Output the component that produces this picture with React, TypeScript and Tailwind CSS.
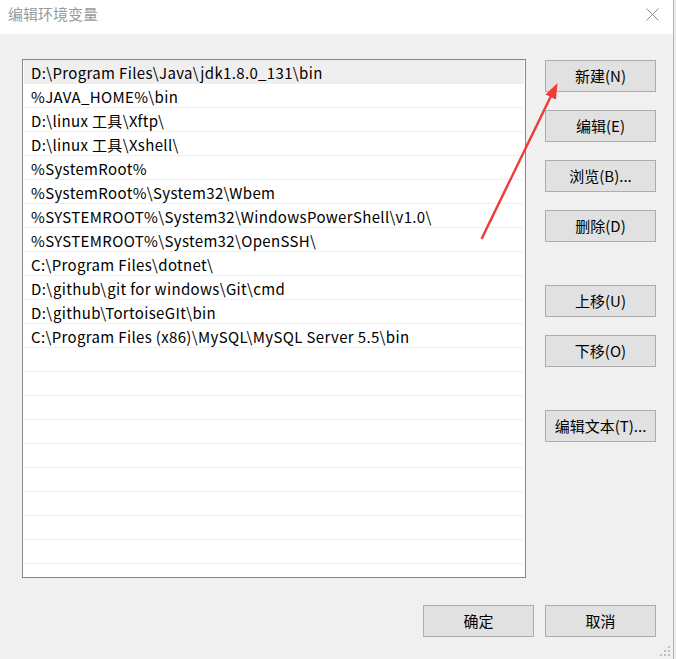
const paths = [
  "D:\\Program Files\\Java\\jdk1.8.0_131\\bin",
  "%JAVA_HOME%\\bin",
  "D:\\linux 工具\\Xftp\\",
  "D:\\linux 工具\\Xshell\\",
  "%SystemRoot%",
  "%SystemRoot%\\System32\\Wbem",
  "%SYSTEMROOT%\\System32\\WindowsPowerShell\\v1.0\\",
  "%SYSTEMROOT%\\System32\\OpenSSH\\",
  "C:\\Program Files\\dotnet\\",
  "D:\\github\\git for windows\\Git\\cmd",
  "D:\\github\\TortoiseGIt\\bin",
  "C:\\Program Files (x86)\\MySQL\\MySQL Server 5.5\\bin",
];

// empty rows fill the rest of the list box
const rows = [...paths, ...Array(10).fill("")];

const Btn = ({ label, className = "" }: { label: string; className?: string }) => (
  <button
    className={`w-[111px] h-[32px] bg-[#e1e1e1] border border-[#adadad] text-[15px] text-black flex items-center justify-center ${className}`}
  >
    {label}
  </button>
);

export default function App() {
  return (
    <div
      className="relative w-[676px] h-[659px] flex bg-[#f0f0f0] overflow-hidden"
      style={{ fontFamily: '"Noto Sans CJK SC", sans-serif' }}
    >
      {/* window */}
      <div className="w-[673px] h-full flex flex-col">
        {/* title bar */}
        <div className="h-[34px] bg-white flex items-center justify-between pl-[8px] pr-[14px] pb-[5px]">
          <span className="text-[15px] text-[#9a9a9a]">编辑环境变量</span>
          <svg width="13" height="13" viewBox="0 0 13 13">
            <path d="M0.5 0.5 L12.5 12.5 M12.5 0.5 L0.5 12.5" stroke="#8a8a8a" strokeWidth="1" />
          </svg>
        </div>

        {/* body */}
        <div className="flex pl-[22px] pt-[25px]">
          {/* path list */}
          <div className="w-[504px] h-[519px] bg-white border border-[#828790] px-px overflow-hidden">
            {rows.map((p, i) => (
              <div
                key={i}
                className={`h-[24px] border-b border-[#efefef] pl-[7px] pt-[3px] flex items-center text-[15px] tracking-[0.35px] text-black whitespace-nowrap ${
                  i === 0 ? "bg-[#efefef]" : ""
                }`}
              >
                {p}
              </div>
            ))}
          </div>

          {/* side buttons */}
          <div className="flex flex-col ml-[19px] pt-[1px]">
            <Btn label="新建(N)" />
            <Btn label="编辑(E)" className="mt-[18px]" />
            <Btn label="浏览(B)..." className="mt-[18px]" />
            <Btn label="删除(D)" className="mt-[18px]" />
            <Btn label="上移(U)" className="mt-[43px]" />
            <Btn label="下移(O)" className="mt-[18px]" />
            <Btn label="编辑文本(T)..." className="mt-[43px]" />
          </div>
        </div>

        {/* footer */}
        <div className="flex justify-end gap-[11px] pr-[17px] mt-[27px]">
          <Btn label="确定" />
          <Btn label="取消" />
        </div>
      </div>

      {/* edge of the window behind */}
      <div className="w-px h-full bg-[#b4b4b4]" />
      <div className="flex-1 h-full bg-[#ececec]" />

      {/* resize grip */}
      <svg className="absolute left-[660px] top-[646px]" width="12" height="12" viewBox="0 0 12 12">
        <rect x="8" y="0" width="2" height="2" fill="#bcbcbc" />
        <rect x="4" y="4" width="2" height="2" fill="#bcbcbc" />
        <rect x="8" y="4" width="2" height="2" fill="#bcbcbc" />
        <rect x="0" y="8" width="2" height="2" fill="#bcbcbc" />
        <rect x="4" y="8" width="2" height="2" fill="#bcbcbc" />
        <rect x="8" y="8" width="2" height="2" fill="#bcbcbc" />
      </svg>

      {/* red annotation arrow */}
      <svg className="absolute left-0 top-0 pointer-events-none" width="676" height="659">
        <line x1="482" y1="238" x2="551" y2="96" stroke="#ef3e3a" strokeWidth="2.5" strokeLinecap="round" />
        <polygon points="557.5,83 556,99.5 545.5,94.5" fill="#ef3e3a" />
      </svg>
    </div>
  );
}
